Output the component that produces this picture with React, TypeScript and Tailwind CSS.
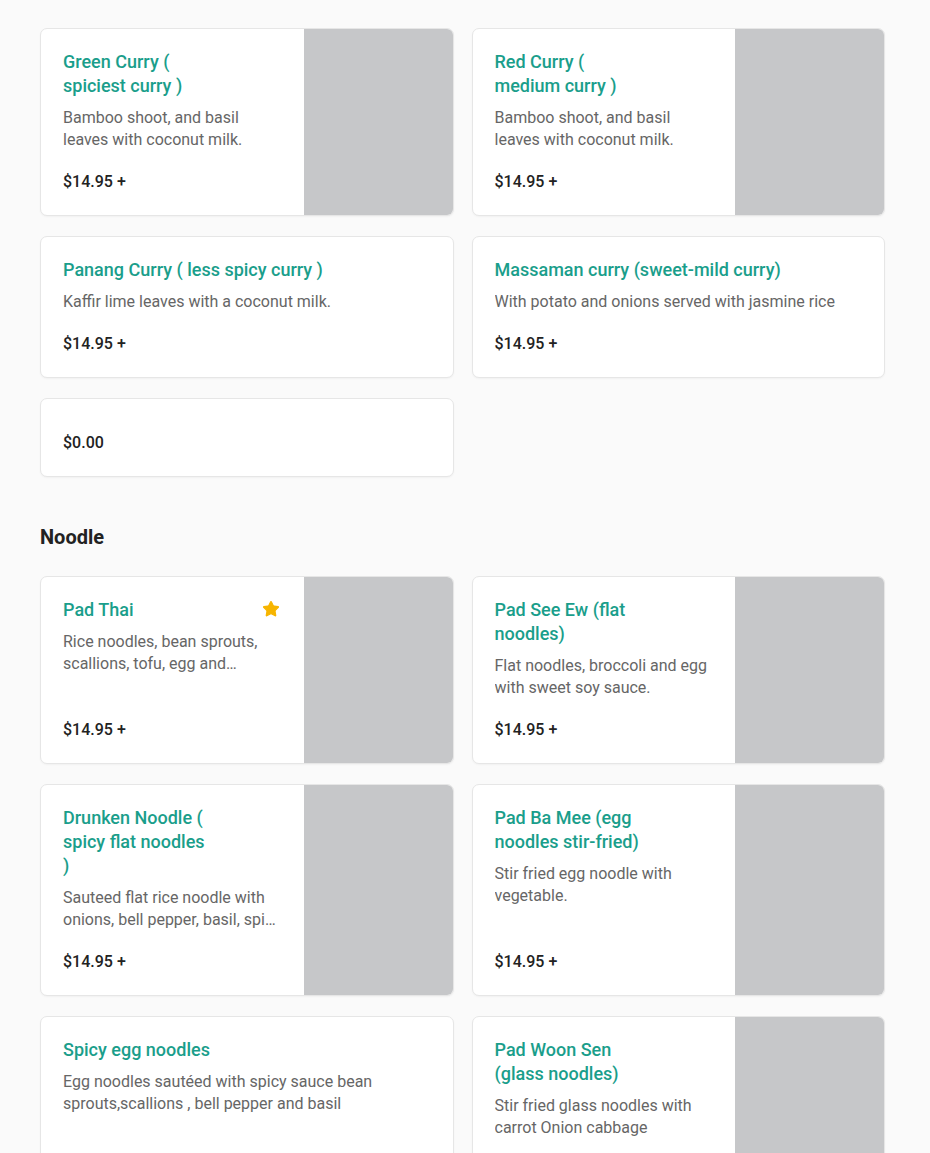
import { Star } from 'lucide-react'

type Item = {
  name: string
  desc?: string
  price: string
  image?: boolean
  star?: boolean
}

const curry: Item[] = [
  { name: 'Green Curry ( spiciest curry )', desc: 'Bamboo shoot, and basil leaves with coconut milk.', price: '$14.95 +', image: true },
  { name: 'Red Curry ( medium curry )', desc: 'Bamboo shoot, and basil leaves with coconut milk.', price: '$14.95 +', image: true },
  { name: 'Panang Curry ( less spicy curry )', desc: 'Kaffir lime leaves with a coconut milk.', price: '$14.95 +' },
  { name: 'Massaman curry (sweet-mild curry)', desc: 'With potato and onions served with jasmine rice', price: '$14.95 +' },
  { name: '', price: '$0.00' },
]

const noodle: Item[] = [
  { name: 'Pad Thai', desc: 'Rice noodles, bean sprouts, scallions, tofu, egg and peanuts with tamarind sauce.', price: '$14.95 +', image: true, star: true },
  { name: 'Pad See Ew (flat noodles)', desc: 'Flat noodles, broccoli and egg with sweet soy sauce.', price: '$14.95 +', image: true },
  { name: 'Drunken Noodle ( spicy flat noodles )', desc: 'Sauteed flat rice noodle with onions, bell pepper, basil, spicy chili sauce.', price: '$14.95 +', image: true },
  { name: 'Pad Ba Mee (egg noodles stir-fried)', desc: 'Stir fried egg noodle with vegetable.', price: '$14.95 +', image: true },
  { name: 'Spicy egg noodles', desc: 'Egg noodles sautéed with spicy sauce bean sprouts,scallions , bell pepper and basil', price: '$14.95 +' },
  { name: 'Pad Woon Sen (glass noodles)', desc: 'Stir fried glass noodles with carrot Onion cabbage', price: '$14.95 +', image: true },
]

function MenuCard({ item }: { item: Item }) {
  return (
    <div className={`flex bg-white border border-[#e6e6e6] rounded-[7px] overflow-hidden shadow-[0_1px_2px_rgba(0,0,0,0.04)] ${item.image ? 'min-h-[186px]' : ''}`}>
      <div className="flex-1 min-w-0 flex flex-col px-[22px] pt-[21px] pb-[21px]">
        {item.name ? (
          <div className="flex items-start justify-between gap-2">
            <div className={`text-[18px] leading-[24px] font-medium text-[#1a9e8b] ${item.image ? 'max-w-[147px]' : ''}`}>
              {item.name}
            </div>
            {item.star && <Star className="w-[18px] h-[18px] mt-[2px] mr-[2px] shrink-0 fill-[#f7b500] text-[#f7b500]" strokeWidth={1.5} />}
          </div>
        ) : (
          <div className="h-[11px]" />
        )}
        {item.desc && (
          <div className="mt-[9px] text-[16px] leading-[22px] text-[#666666] line-clamp-2">{item.desc}</div>
        )}
        <div className={`mt-auto text-[16px] leading-[24px] font-medium text-[#222222] ${item.name ? 'pt-[19px]' : ''}`}>
          {item.price}
        </div>
      </div>
      {item.image && <div className="w-[149px] shrink-0 bg-[#c6c7c9]" />}
    </div>
  )
}

export default function App() {
  return (
    <div className="min-h-screen bg-[#fafafa] font-['Roboto',sans-serif] overflow-hidden h-[1153px]">
      <div className="ml-[40px] w-[845px] pt-[28px]">
        <div className="grid grid-cols-2 gap-x-[18px] gap-y-[20px]">
          {curry.map((it, i) => <MenuCard key={i} item={it} />)}
        </div>
        <h2 className="mt-[46px] mb-[25px] text-[20px] leading-[28px] font-bold text-[#222222]">Noodle</h2>
        <div className="grid grid-cols-2 gap-x-[18px] gap-y-[20px]">
          {noodle.map((it, i) => <MenuCard key={i} item={it} />)}
        </div>
      </div>
    </div>
  )
}
